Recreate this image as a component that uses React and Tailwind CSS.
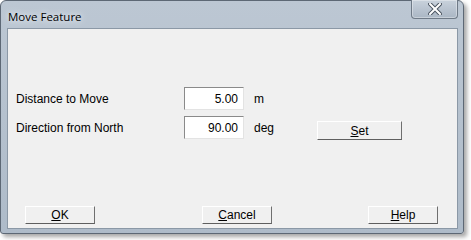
const font = { fontFamily: '"Liberation Sans", Arial, sans-serif' };

function WinButton({ children, className = "" }) {
  return (
    <button
      className={`h-[18px] w-[70px] bg-[#f0f0f0] border-t border-l border-t-[#ffffff] border-l-[#ffffff] border-r border-b border-r-[#6f6f6f] border-b-[#5f5f5f] text-[12px] leading-none text-black flex items-center justify-center ${className}`}
    >
      {children}
    </button>
  );
}

function Field({ value }) {
  return (
    <div className="h-[23px] w-[60px] bg-white border-t border-l border-t-[#8a8a8a] border-l-[#8a8a8a] border-r border-b border-r-[#e3e3e3] border-b-[#e3e3e3] flex items-center justify-end pr-[5px] text-[12px]">
      {value}
    </div>
  );
}

export default function App() {
  return (
    <div className="w-[471px] h-[240px] bg-white" style={font}>
      <div className="w-[464px] h-[234px] rounded-t-[6px] rounded-b-[3px] border border-[#5d6875] bg-gradient-to-b from-[#bcc7d3] to-[#aebbc9] shadow-[3px_3px_4px_rgba(0,0,0,0.35)] flex flex-col">
        <div className="h-[27px] flex items-start justify-between">
          <div className="pl-[7px] pt-[7px] text-[11.5px] text-black" style={{ fontFamily: '"Open Sans", "Noto Sans", sans-serif', textShadow: "0 0 8px #e8edf2, 0 0 4px #e8edf2" }}>
            Move Feature
          </div>
          <div className="mr-[5px] w-[47px] h-[19px] -mt-px rounded-b-[4px] border border-[#6f7a87] border-t-0 bg-gradient-to-b from-[#c9d2dc] to-[#aab6c4] shadow-[inset_0_0_0_1px_rgba(255,255,255,0.35)] flex items-center justify-center">
            <svg width="14" height="12" viewBox="0 0 14 12">
              <path d="M2 1 L12 11 M12 1 L2 11" stroke="#4a5460" strokeWidth="4" strokeLinecap="square" />
              <path d="M2 1 L12 11 M12 1 L2 11" stroke="#ffffff" strokeWidth="2" strokeLinecap="square" />
            </svg>
          </div>
        </div>
        <div className="ml-[6px] mr-[5px] mb-[4px] flex-1 border border-[#8b98a6] bg-[#f0f0f0] flex flex-col text-[12px] text-black">
          <div className="pt-[58px] pl-[8px] flex flex-col gap-[6px]">
            <div className="flex items-center">
              <div className="w-[168px]">Distance to Move</div>
              <Field value="5.00" />
              <div className="ml-[10px]">m</div>
            </div>
            <div className="flex items-start">
              <div className="w-[168px] h-[23px] flex items-center">Direction from North</div>
              <Field value="90.00" />
              <div className="ml-[10px] w-[63px] h-[23px] flex items-center">deg</div>
              <WinButton className="mt-[5px] w-[85px] h-[19px]">
                <span><u>S</u>et</span>
              </WinButton>
            </div>
          </div>
          <div className="mt-auto mb-[4px] pl-[17px] flex">
            <WinButton><span><u>O</u>K</span></WinButton>
            <WinButton className="ml-[107px]"><span><u>C</u>ancel</span></WinButton>
            <WinButton className="ml-[96px]"><span><u>H</u>elp</span></WinButton>
          </div>
        </div>
      </div>
    </div>
  );
}
